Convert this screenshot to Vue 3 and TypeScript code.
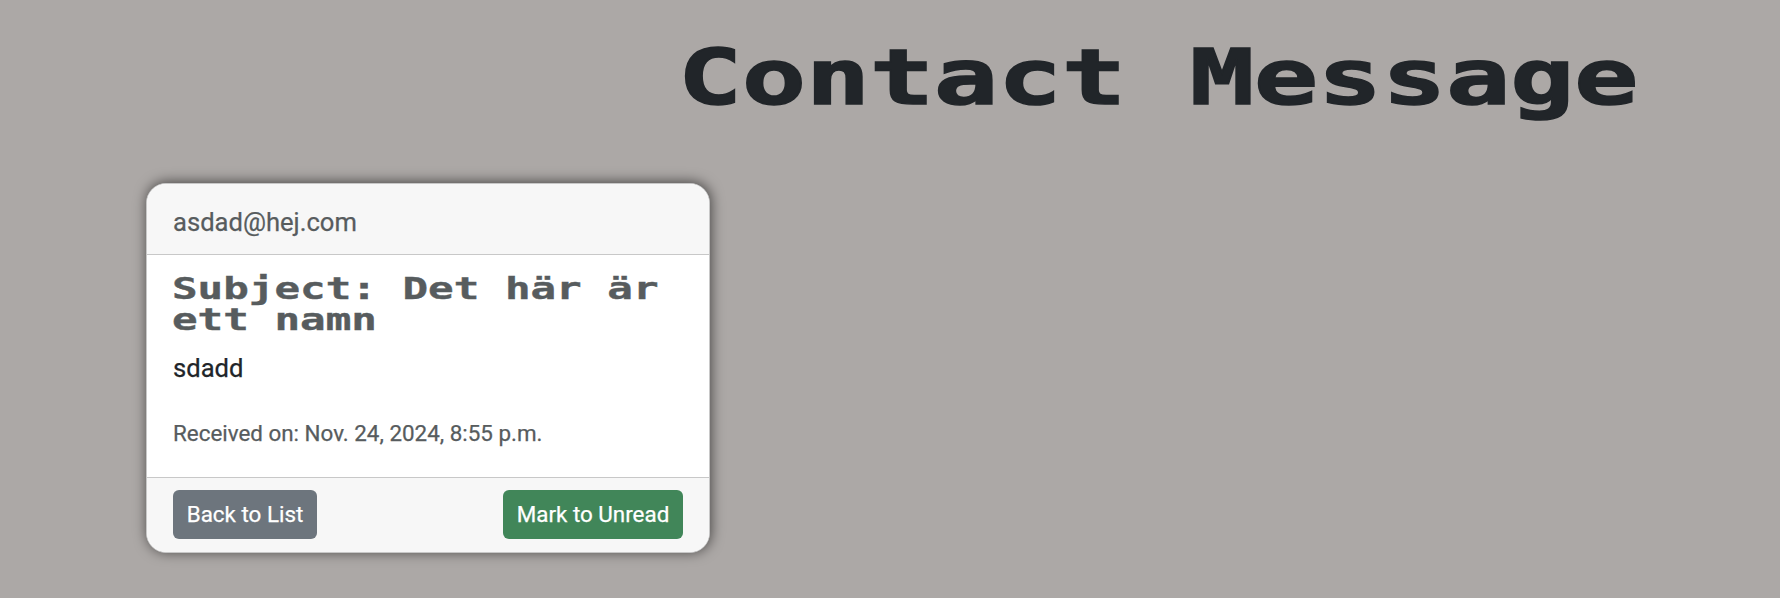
<script setup lang="ts">
interface ContactMessage {
  email: string
  subject: string
  body: string
  received: string
}

const message: ContactMessage = {
  email: 'asdad@hej.com',
  subject: 'Det här är ett namn',
  body: 'sdadd',
  received: 'Nov. 24, 2024, 8:55 p.m.',
}
</script>

<template>
  <main class="page">
    <h1 class="title">Contact Message</h1>
    <article class="card">
      <header class="card-header">{{ message.email }}</header>
      <section class="card-body">
        <h2 class="subject">Subject: {{ message.subject }}</h2>
        <p class="text">{{ message.body }}</p>
        <p class="received">Received on: {{ message.received }}</p>
      </section>
      <footer class="card-footer">
        <button type="button" class="btn btn-secondary">Back to List</button>
        <button type="button" class="btn btn-success">Mark to Unread</button>
      </footer>
    </article>
  </main>
</template>

<style>
body {
  margin: 0;
  background: #aca8a6;
}
</style>

<style scoped>
.page {
  box-sizing: border-box;
  height: 598px;
  padding: 31px 0 0 146px;
  overflow: hidden;
  font-family: Roboto, sans-serif;
  color: #212529;
}

.title,
.subject {
  font-family: "DejaVu Sans Mono", monospace;
  font-weight: 700;
  transform-origin: 0 0;
}

.title {
  width: 720px;
  height: 94px;
  margin: 0 0 58px 532px;
  font-size: 76px;
  line-height: 94px;
  white-space: nowrap;
  transform: scaleX(1.399);
  -webkit-text-stroke: 1.5px currentColor;
}

.card {
  box-sizing: border-box;
  display: flex;
  flex-direction: column;
  width: 564px;
  height: 370px;
  border: 1px solid #c8c8c8;
  border-radius: 20px;
  background: #fff;
  box-shadow: 1px -1px 13px rgba(0, 0, 0, 0.6);
  overflow: hidden;
}

.card-header {
  box-sizing: border-box;
  height: 71px;
  padding: 19px 26px 0;
  border-bottom: 1px solid #c8c8c8;
  background: #f7f7f7;
  color: #575c5e;
  font-size: 25.6px;
  line-height: 38px;
}

.card-body {
  flex: 1;
  padding: 18px 26px 0 25px;
}

.subject {
  width: 374px;
  margin: 0;
  color: #575c5e;
  font-size: 31px;
  line-height: 31px;
  transform: scaleX(1.372);
  -webkit-text-stroke: 0.4px currentColor;
}

.text {
  margin: 14px 0 0 1px;
  font-size: 25.6px;
  line-height: 38px;
}

.received {
  margin: 29px 0 0 1px;
  color: #575c5e;
  font-size: 22.4px;
  line-height: 34px;
}

.card-header,
.text,
.received,
.btn {
  -webkit-text-stroke: 0.25px currentColor;
}

.card-footer {
  box-sizing: border-box;
  display: flex;
  justify-content: space-between;
  height: 75px;
  padding: 12px 26px 0;
  border-top: 1px solid #c8c8c8;
  background: #f7f7f7;
}

.btn {
  height: 49px;
  padding: 0;
  border: 0;
  border-radius: 6px;
  color: #fff;
  font: 400 22.4px/49px Roboto, sans-serif;
}

.btn-secondary {
  width: 144px;
  background: #6d757d;
}

.btn-success {
  width: 180px;
  background: #418659;
}
</style>
